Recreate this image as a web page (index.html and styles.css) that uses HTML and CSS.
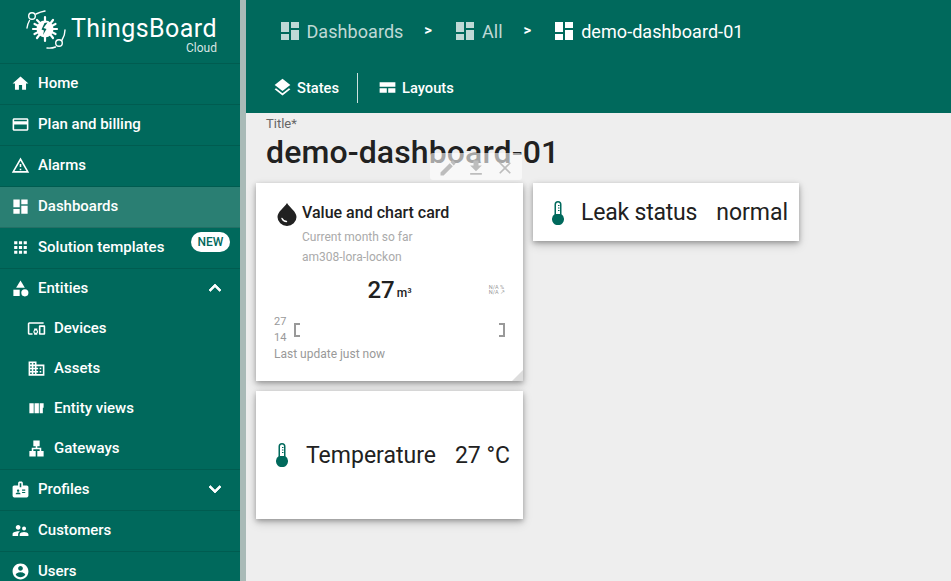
FILE: index.html
```html
<!DOCTYPE html>
<html lang="en">
<head>
<meta charset="utf-8">
<title>demo-dashboard-01</title>
<link rel="stylesheet" href="styles.css">
</head>
<body>
<svg class="defs" width="0" height="0" aria-hidden="true">
  <symbol id="i-home" viewBox="0 0 24 24"><path d="M10 20v-6h4v6h5v-8h3L12 3 2 12h3v8z"/></symbol>
  <symbol id="i-card" viewBox="0 0 24 24"><path d="M20 4H4c-1.11 0-1.99.89-1.99 2L2 18c0 1.11.89 2 2 2h16c1.11 0 2-.89 2-2V6c0-1.11-.89-2-2-2zm0 14H4v-6h16v6zm0-10H4V6h16v2z"/></symbol>
  <symbol id="i-warn" viewBox="0 0 24 24"><path d="M12 5.99 19.53 19H4.47L12 5.99M12 2 1 21h22L12 2zm1 14h-2v2h2v-2zm0-6h-2v4h2v-4z"/></symbol>
  <symbol id="i-dash" viewBox="0 0 24 24"><path d="M3 13h8V3H3v10zm0 8h8v-6H3v6zm10 0h8V11h-8v10zm0-18v6h8V3h-8z"/></symbol>
  <symbol id="i-apps" viewBox="0 0 24 24"><path d="M4 8h4V4H4v4zm6 12h4v-4h-4v4zm-6 0h4v-4H4v4zm0-6h4v-4H4v4zm6 0h4v-4h-4v4zm6-10v4h4V4h-4zm-6 4h4V4h-4v4zm6 6h4v-4h-4v4zm0 6h4v-4h-4v4z"/></symbol>
  <symbol id="i-cat" viewBox="0 0 24 24"><path d="M12 2l-5.500 9h11z"/><circle cx="17.500" cy="17.500" r="4.500"/><path d="M3 13.500h8v8H3z"/></symbol>
  <symbol id="i-dev" viewBox="0 0 24 24"><path d="M3 6h18V4H3c-1.100 0-2 .9-2 2v12c0 1.100.9 2 2 2h4v-2H3V6zm10 6H9v1.780c-.61.55-1 1.330-1 2.220s.39 1.670 1 2.220V20h4v-1.780c.61-.55 1-1.340 1-2.220s-.39-1.670-1-2.220V12zm-2 5.500c-.83 0-1.500-.67-1.500-1.500s.67-1.500 1.500-1.500 1.500.67 1.500 1.500-.67 1.500-1.500 1.500zM22 8h-6c-.5 0-1 .5-1 1v10c0 .5.5 1 1 1h6c.5 0 1-.5 1-1V9c0-.5-.5-1-1-1zm-1 10h-4v-8h4v8z"/></symbol>
  <symbol id="i-dom" viewBox="0 0 24 24"><path d="M12 7V3H2v18h20V7H12zM6 19H4v-2h2v2zm0-4H4v-2h2v2zm0-4H4V9h2v2zm0-4H4V5h2v2zm4 12H8v-2h2v2zm0-4H8v-2h2v2zm0-4H8V9h2v2zm0-4H8V5h2v2zm10 12h-8v-2h2v-2h-2v-2h2v-2h-2V9h8v10zm-2-8h-2v2h2v-2zm0 4h-2v2h2v-2z"/></symbol>
  <symbol id="i-quilt" viewBox="0 0 24 24"><path d="M3 5.500h5.500V18H3zM9.500 5.500H15V18H9.500zM16 5.500h5V11h-1v7h-4z"/></symbol>
  <symbol id="i-lan" viewBox="0 0 24 24"><path d="M13 22h8v-7h-3v-4h-5V9h3V2H8v7h3v2H6v4H3v7h8v-7H8v-2h8v2h-3z"/></symbol>
  <symbol id="i-badge" viewBox="0 0 24 24"><path d="M20 7h-5V4c0-1.100-.9-2-2-2h-2c-1.100 0-2 .9-2 2v3H4c-1.100 0-2 .9-2 2v11c0 1.100.9 2 2 2h16c1.100 0 2-.9 2-2V9c0-1.100-.9-2-2-2zM9 12c.83 0 1.500.67 1.500 1.500S9.830 15 9 15s-1.500-.67-1.500-1.500S8.170 12 9 12zm3 6H6v-.75c0-1 2-1.500 3-1.500s3 .5 3 1.500V18zm1-9h-2V4h2v5zm5 7.500h-4V15h4v1.500zm0-3h-4V12h4v1.500z"/></symbol>
  <symbol id="i-sup" viewBox="0 0 24 24"><path d="M16.500 12c1.380 0 2.490-1.120 2.490-2.500S17.880 7 16.500 7C15.120 7 14 8.120 14 9.500s1.120 2.500 2.500 2.500zM9 11c1.660 0 2.990-1.340 2.990-3S10.660 5 9 5C7.340 5 6 6.340 6 8s1.340 3 3 3zm7.500 3c-1.830 0-5.500.92-5.500 2.750V19h11v-2.250c0-1.830-3.670-2.750-5.500-2.750zM9 13c-2.330 0-7 1.170-7 3.500V19h7v-2.250c0-.85.33-2.340 2.370-3.470C10.500 13.100 9.660 13 9 13z"/></symbol>
  <symbol id="i-acc" viewBox="0 0 24 24"><path d="M12 2C6.480 2 2 6.480 2 12s4.480 10 10 10 10-4.480 10-10S17.520 2 12 2zm0 3c1.660 0 3 1.340 3 3s-1.340 3-3 3-3-1.340-3-3 1.340-3 3-3zm0 14.200c-2.500 0-4.710-1.280-6-3.220.03-1.990 4-3.080 6-3.080 1.990 0 5.970 1.090 6 3.080-1.290 1.940-3.500 3.220-6 3.220z"/></symbol>
  <symbol id="i-up" viewBox="0 0 24 24"><path d="M12 8l-6 6 1.410 1.410L12 10.830l4.590 4.580L18 14z"/></symbol>
  <symbol id="i-down" viewBox="0 0 24 24"><path d="M16.590 8.590 12 13.170 7.410 8.590 6 10l6 6 6-6z"/></symbol>
  <symbol id="i-layers" viewBox="0 0 24 24"><path d="M11.990 18.540l-7.370-5.730L3 14.070l9 7 9-7-1.630-1.270-7.380 5.740zM12 16l7.360-5.730L21 9l-9-7-9 7 1.630 1.270L12 16z"/></symbol>
  <symbol id="i-layouts" viewBox="0 0 24 24"><path d="M3 6h18v5.200H3zM3 12.800h8.200V18H3zM12.800 12.800H21V18h-8.200z"/></symbol>
  <symbol id="i-therm" viewBox="0 0 12 24"><path fill-rule="evenodd" d="M6 0a3.500 3.500 0 0 0-3.500 3.500v9.800a6 6 0 1 0 7 0V3.500A3.500 3.500 0 0 0 6 0zm0 1.500a2 2 0 0 1 2 2V13H4V3.500a2 2 0 0 1 2-2z"/><path d="M6 4h1.500v1H6zM6 6.500h1.500v1H6zM6 9h1.500v1H6z"/></symbol>
  <symbol id="i-edit" viewBox="0 0 24 24"><path d="M3 17.250V21h3.750L17.810 9.940l-3.750-3.750L3 17.250zM20.710 7.040c.39-.39.39-1.020 0-1.410l-2.340-2.340c-.39-.39-1.020-.39-1.410 0l-1.830 1.830 3.750 3.750 1.830-1.830z"/></symbol>
  <symbol id="i-save" viewBox="0 0 24 24"><path d="M19 9h-4V3H9v6H5l7 7 7-7zM5 18v2h14v-2H5z"/></symbol>
  <symbol id="i-close" viewBox="0 0 24 24"><path d="M19 6.410 17.590 5 12 10.590 6.410 5 5 6.410 10.590 12 5 17.590 6.410 19 12 13.410 17.590 19 19 17.590 13.410 12z"/></symbol>
</svg>

<div class="app">
  <aside class="side">
    <div class="brand">
      <svg class="brand-mark" viewBox="0 0 44 44" aria-hidden="true">
        <g fill="none" stroke="#fff" stroke-width="1.400" stroke-linecap="round">
          <path d="M10 5C13 3.500 16 2.500 19 2"/>
          <path d="M3.500 11.500C2 14 1.300 16.500 1 19"/>
          <circle cx="6" cy="7" r="3.300"/>
          <path d="M21 39C24 39.300 27 39 29.500 38"/>
          <path d="M36 31C38 28 39 24.500 39 21"/>
          <circle cx="33" cy="34" r="3.300"/>
        </g>
        <g stroke="#fff" stroke-width="2.200" stroke-linecap="round">
          <path d="M11 11l4 4M19 8v5M27 11l-3 4M31 20h-5M27 29l-3-4M19 32v-5M11 29l3-4M7 20h5M8.500 15l4 2M8.500 25l4-2M29.500 15l-4 2M29.500 25l-4-2"/>
        </g>
        <circle cx="19" cy="20" r="8.500" fill="#fff"/>
        <path d="M21.500 13.500l-4 5.500 3 1-3.500 6 1-4.500-2.500-1 3-6.500z" fill="#00695c"/>
      </svg>
      <div class="brand-text">
        <span class="brand-name">ThingsBoard</span>
        <span class="brand-sub">Cloud</span>
      </div>
    </div>
    <nav class="menu">
      <a class="item"><svg class="ico"><use href="#i-home"/></svg>Home</a>
      <a class="item"><svg class="ico"><use href="#i-card"/></svg>Plan and billing</a>
      <a class="item"><svg class="ico"><use href="#i-warn"/></svg>Alarms</a>
      <a class="item active"><svg class="ico"><use href="#i-dash"/></svg>Dashboards</a>
      <a class="item"><svg class="ico"><use href="#i-apps"/></svg>Solution templates<span class="new">NEW</span></a>
      <div class="group">
        <a class="item plain"><svg class="ico"><use href="#i-cat"/></svg>Entities<svg class="ico chev"><use href="#i-up"/></svg></a>
        <a class="sub"><svg class="ico"><use href="#i-dev"/></svg>Devices</a>
        <a class="sub"><svg class="ico"><use href="#i-dom"/></svg>Assets</a>
        <a class="sub"><svg class="ico"><use href="#i-quilt"/></svg>Entity views</a>
        <a class="sub"><svg class="ico"><use href="#i-lan"/></svg>Gateways</a>
      </div>
      <a class="item"><svg class="ico"><use href="#i-badge"/></svg>Profiles<svg class="ico chev"><use href="#i-down"/></svg></a>
      <a class="item"><svg class="ico"><use href="#i-sup"/></svg>Customers</a>
      <a class="item"><svg class="ico"><use href="#i-acc"/></svg>Users</a>
    </nav>
  </aside>
  <div class="scrollbar"></div>
  <main class="main">
    <header class="top">
      <div class="crumbs">
        <span class="crumb dim"><svg class="cr-ico"><use href="#i-dash"/></svg>Dashboards</span>
        <span class="sep">&gt;</span>
        <span class="crumb dim"><svg class="cr-ico"><use href="#i-dash"/></svg>All</span>
        <span class="sep">&gt;</span>
        <span class="crumb"><svg class="cr-ico"><use href="#i-dash"/></svg>demo-dashboard-01</span>
      </div>
      <div class="tools">
        <span class="tool"><svg class="tool-ico"><use href="#i-layers"/></svg>States</span>
        <span class="divider"></span>
        <span class="tool"><svg class="tool-ico"><use href="#i-layouts"/></svg>Layouts</span>
      </div>
    </header>
    <section class="content">
      <div class="title-label">Title*</div>
      <h1 class="title">demo-dashboard-01</h1>
      <div class="grid">
        <div class="col col-a">
          <article class="card chart-card">
            <div class="actions">
              <svg class="act"><use href="#i-edit"/></svg>
              <svg class="act"><use href="#i-save"/></svg>
              <svg class="act"><use href="#i-close"/></svg>
            </div>
            <div class="cc-head">
              <svg class="drop" viewBox="0 0 24 24" aria-hidden="true">
                <path d="M12 1C9.500 5.500 2.500 9.500 2.500 15a9.500 9 0 0 0 19 0C21.500 9.500 14.500 5.500 12 1z" fill="#212121"/>
                <path d="M7 16.500c.8 1.800 2.300 2.900 4.500 3" fill="none" stroke="#fff" stroke-width="1.400" stroke-linecap="round"/>
              </svg>
              <div>
                <div class="cc-title">Value and chart card</div>
                <div class="cc-sub first">Current month so far</div>
                <div class="cc-sub">am308-lora-lockon</div>
              </div>
            </div>
            <div class="cc-value">
              <span class="val">27</span><span class="unit">m³</span>
              <span class="na"><span>N/A %</span><span>N/A ↗</span></span>
            </div>
            <div class="cc-chart">
              <div class="axis"><span>27</span><span>14</span></div>
              <div class="plot"><span class="brk left"></span><span class="brk right"></span></div>
            </div>
            <div class="updated">Last update just now</div>
            <span class="resize"></span>
          </article>
          <article class="card val-card tall">
            <svg class="therm"><use href="#i-therm"/></svg>
            <span class="vc-label">Temperature</span>
            <span class="vc-value">27 °C</span>
          </article>
        </div>
        <div class="col col-b">
          <article class="card val-card short">
            <svg class="therm"><use href="#i-therm"/></svg>
            <span class="vc-label">Leak status</span>
            <span class="vc-value">normal</span>
          </article>
        </div>
      </div>
    </section>
  </main>
</div>
</body>
</html>
```
FILE: styles.css
```css
* { box-sizing: border-box; }
html, body { margin: 0; height: 100%; overflow: hidden; }
body { font-family: Roboto, "Liberation Sans", sans-serif; color: #212121; background: #eee; }
.defs { position: absolute; }

.app { display: flex; height: 581px; overflow: hidden; }

/* sidebar */
.side { width: 240px; flex: none; background: #00695c; color: #fff; }
.brand { height: 64px; display: flex; align-items: flex-start; padding: 9px 0 0 26px; gap: 1px; border-bottom: 1px solid rgba(0,0,0,.12); }
.brand-mark { width: 44px; height: 44px; flex: none; }
.brand-text { display: flex; flex-direction: column; align-items: flex-end; padding-top: 7px; }
.brand-name { font-size: 25px; line-height: 26px; letter-spacing: .42px; font-weight: 400; }
.brand-sub { font-size: 12px; line-height: 13px; color: rgba(255,255,255,.85); }

.menu { display: flex; flex-direction: column; }
.item { height: 41px; flex: none; display: flex; align-items: center; padding: 0 13px 2px 11px; gap: 8px; font-size: 15px; font-weight: 500; border-bottom: 1px solid rgba(0,0,0,.12); position: relative; }
.item.plain { height: 40px; border-bottom: 0; }
.item.active { background: #2a7f73; }
.group { display: flex; flex-direction: column; border-bottom: 1px solid rgba(0,0,0,.12); }
.sub { height: 40px; flex: none; display: flex; align-items: center; padding: 0 0 2px 27px; gap: 8px; font-size: 15px; font-weight: 500; }
.ico { width: 19px; height: 19px; fill: #fff; flex: none; }
.chev { width: 24px; height: 24px; margin-left: auto; margin-right: 0; stroke: #fff; stroke-width: .8; }
.new { position: absolute; right: 10px; top: 4px; height: 20px; width: 39px; border-radius: 10px; background: #fff; color: #00695c; font-size: 12px; line-height: 20px; text-align: center; }

.scrollbar { width: 6px; flex: none; background: #a9bab7; }

/* main */
.main { flex: 1; min-width: 0; display: flex; flex-direction: column; position: relative; }
.top { background: #00695c; color: #fff; height: 113px; flex: none; }
.crumbs { height: 62px; display: flex; align-items: center; padding-left: 31.500px; }
.crumb { display: flex; align-items: center; gap: 5px; font-size: 18px; letter-spacing: .06px; }
.crumb.dim { color: rgba(255,255,255,.75); }
.cr-ico { width: 24px; height: 24px; fill: currentColor; flex: none; }
.sep { font-weight: 700; font-size: 15px; width: 49.500px; text-align: center; margin-top: -3px; }
.tools { height: 49px; display: flex; align-items: center; padding: 0 0 0 26px; margin-top: 1px; }
.tool { display: flex; align-items: center; gap: 4px; font-size: 14.700px; font-weight: 500; }
.tool-ico { width: 21px; height: 21px; fill: #fff; flex: none; }
.divider { width: 1px; height: 30px; background: rgba(255,255,255,.8); margin: 0 19px 0 18px; }

.content { flex: 1; padding: 4px 0 0 10px; position: relative; }
.title-label { font-size: 13px; line-height: 14px; color: #666; padding-left: 10px; }
.title { margin: 1px 0 0; padding-left: 10px; font-size: 32px; line-height: 40px; font-weight: 500; color: #212121; letter-spacing: .12px; }
.grid { display: flex; gap: 10px; margin-top: 11px; }
.col { display: flex; flex-direction: column; gap: 10px; }
.col-a { width: 267px; }
.col-b { width: 266px; }

.card { background: #fff; box-shadow: 0 2px 5px rgba(0,0,0,.3), 0 4px 10px rgba(0,0,0,.14); position: relative; }
.chart-card { height: 198px; padding: 20px 18px 0; display: flex; flex-direction: column; }
.actions { position: absolute; top: -30px; right: 1px; width: 92px; height: 27px; padding-top: 2px; display: flex; align-items: center; justify-content: center; gap: 8.500px; background: rgba(255,255,255,.6); border-radius: 3px; }
.act { width: 20px; height: 20px; fill: #bdbdbd; }

.cc-head { display: flex; gap: 3px; padding-top: 1px; padding-left: 1px; }
.drop { width: 24px; height: 24px; flex: none; margin-top: -2px; }
.cc-title { font-size: 16px; line-height: 18px; font-weight: 500; }
.cc-sub { font-size: 12px; line-height: 20px; color: #aaa; }
.cc-sub.first { margin-top: 5px; }
.cc-value { height: 44px; display: flex; align-items: center; justify-content: center; position: relative; margin-top: 1px; }
.val { font-size: 24px; font-weight: 500; }
.unit { font-size: 12px; font-weight: 500; margin: 6px 0 0 2px; }
.na { position: absolute; right: 0; top: 17px; display: flex; flex-direction: column; font-size: 5.500px; line-height: 5px; color: #999; }
.cc-chart { display: flex; gap: 7px; margin-top: 2px; }
.axis { display: flex; flex-direction: column; font-size: 11px; line-height: 16px; color: #999; width: 13px; }
.plot { flex: 1; height: 14px; margin-top: 9px; display: flex; justify-content: space-between; }
.brk { width: 6px; height: 14px; border: 2px solid #999; }
.brk.left { border-right: 0; }
.brk.right { border-left: 0; }
.updated { font-size: 12px; line-height: 16px; color: #999; }
.resize { position: absolute; right: 0; bottom: 0; width: 0; height: 0; border-style: solid; border-width: 0 0 11px 11px; border-color: transparent transparent #ddd transparent; }

.val-card { display: flex; align-items: center; font-size: 23px; }
.val-card.tall { height: 128px; padding-left: 20px; }
.val-card.short { height: 58px; padding: 1px 0 0 19px; }
.therm { width: 12px; height: 24px; fill: #00695c; flex: none; margin-right: 18px; }
.short .therm { margin-right: 17px; }
.vc-label { margin-right: 19px; }
.short .vc-label { letter-spacing: -.2px; }
```
